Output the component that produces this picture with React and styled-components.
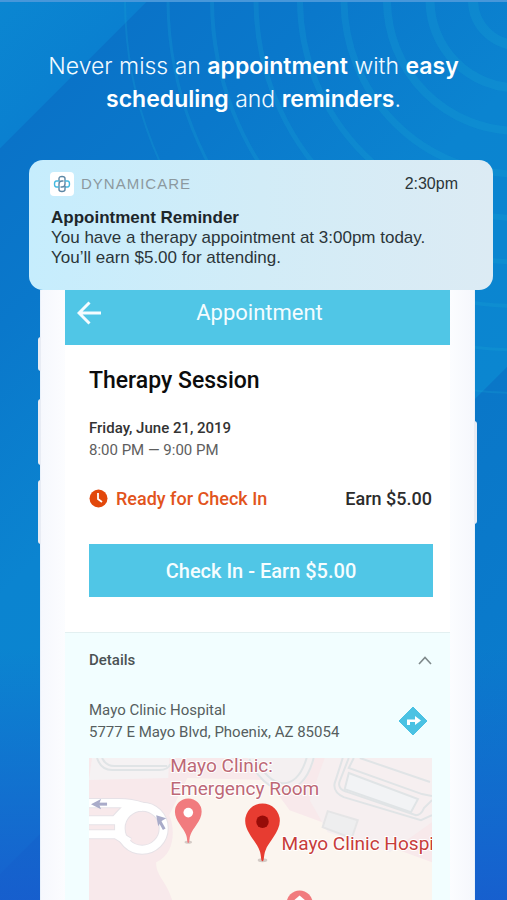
import React from "react";
import styled, { createGlobalStyle } from "styled-components";

const Global = createGlobalStyle`
  * { box-sizing: border-box; }
  body { margin: 0; font-family: Roboto, "Liberation Sans", sans-serif; color: #2c2c2c; }
  h1, h2, h3, p { margin: 0; font-weight: 400; }
  address { font-style: normal; }
  button { border: 0; padding: 0; background: none; font: inherit; color: inherit; cursor: pointer; }
  svg { display: block; }
`;

const Page = styled.div`
  position: relative;
  height: 100vh;
  overflow: hidden;
  display: flex;
  flex-direction: column;
  background: #0a7ccf;
`;

const Backdrop = styled.div`
  position: absolute;
  inset: 0;
  border-top: 2px solid #4797da;
  background:
    linear-gradient(180deg, rgba(24, 92, 206, 0) 72%, rgba(24, 92, 206, 0.9) 100%),
    linear-gradient(135deg, #0b86d1 0, #0a80d0 103px, transparent 104px),
    linear-gradient(135deg, #0a73c8 104px, #0a78cb 230px, #0b84d0 420px, #0b86d0 616px, #0a77c8 617px, #0a7ecf 100%);
  svg { position: absolute; top: 0; right: 0; }
`;

const Headline = styled.h1`
  position: relative;
  padding: 50px 36px 0;
  text-align: center;
  font-family: Inter, "Open Sans", sans-serif;
  font-size: 23px;
  line-height: 33px;
  font-weight: 300;
  color: #f2faff;
  strong { font-weight: 600; color: #fff; }
`;

const Notice = styled.section`
  position: relative;
  z-index: 1;
  margin: 44px 14px 0 29px;
  height: 130px;
  padding: 12px 35px 0 21px;
  border-radius: 14px;
  background: linear-gradient(90deg, #c6edfd, #d2ecf7 50%, #dcebf4);
  font-family: "Liberation Sans", sans-serif;
  font-size: 16px;
  line-height: 20px;
  color: #2b3539;
`;

const NoticeTop = styled.div`
  display: flex;
  align-items: center;
  height: 24px;
  gap: 7px;
`;

const AppBadge = styled.span`
  display: grid;
  place-items: center;
  width: 24px;
  height: 24px;
  border-radius: 4px;
  background: #fff;
`;

const AppName = styled.span`
  flex: 1;
  font-size: 15px;
  letter-spacing: 1px;
  color: #8c999f;
`;

const NoticeBody = styled.div`
  padding: 12px 0 0 1px;
  font-size: 17px;
  h2 { font-size: 17px; font-weight: 700; color: #1d262a; }
`;

const Phone = styled.main`
  position: relative;
  flex: 1;
  min-height: 0;
  margin: 0 32px 0 40px;
  padding: 0 25px;
  background: linear-gradient(90deg, #f6f8fd, #fcfdff 6%, #fcfdff 94%, #f5f7fc);
  border: solid #e9f1fa;
  border-width: 0 1px;
`;

const SideKey = styled.i`
  position: absolute;
  ${(p) => p.$side}: -3px;
  top: ${(p) => p.$top}px;
  width: 3px;
  height: ${(p) => p.$length}px;
  background: #e8ecf4;
  border-radius: ${(p) => (p.$side === "left" ? "3px 0 0 3px" : "0 3px 3px 0")};
`;

const Screen = styled.div`
  display: flex;
  flex-direction: column;
  height: 100%;
  margin: 0 -1px;
  background: #fff;
`;

const AppBar = styled.header`
  display: grid;
  grid-template-columns: 48px 1fr 44px;
  align-items: center;
  height: 55px;
  padding-bottom: 9px;
  background: #50c6e6;
  color: #f4fcff;
  text-align: center;
  h1 { font-size: 22px; line-height: 28px; }
  svg { margin: 0 auto; }
`;

const Session = styled.section`
  padding: 22px 17px 35px 24px;
`;

const Title = styled.h2`
  font-size: 23px;
  line-height: 28px;
  font-weight: 500;
  color: #0c0c0c;
`;

const When = styled.div`
  padding-top: 22px;
  font-size: 15px;
  line-height: 22px;
  color: #5e5e5e;
  strong { font-weight: 500; color: #333; }
`;

const StatusRow = styled.div`
  display: flex;
  align-items: center;
  justify-content: space-between;
  margin-top: 25px;
  padding-right: 1px;
  height: 24px;
  font-size: 18px;
  font-weight: 500;
`;

const Status = styled.span`
  display: flex;
  align-items: center;
  gap: 8px;
  color: #e2541c;
`;

const CheckIn = styled.button`
  && {
    width: 100%;
    height: 53px;
    margin-top: 34px;
    background: #50c6e6;
    color: #f6fdff;
    font-size: 20px;
    font-weight: 500;
  }
`;

const Details = styled.section`
  flex: 1;
  min-height: 0;
  display: flex;
  flex-direction: column;
  padding: 0 18px 0 24px;
  border-top: 1px solid #e3f0f1;
  background: #f2feff;
  color: #565e60;
  font-size: 15px;
  line-height: 22px;
`;

const DetailsToggle = styled.button`
  && {
    display: flex;
    align-items: center;
    justify-content: space-between;
    height: 54px;
    font-weight: 500;
    color: #4b5254;
  }
`;

const Place = styled.div`
  display: flex;
  align-items: center;
  justify-content: space-between;
  padding: 12px 4px 15px 0;
  height: 71px;
`;

const MapArea = styled.div`
  flex: 1;
  min-height: 0;
  overflow: hidden;
  background: #fbf5f0;
  svg { width: 100%; height: 142px; }
`;

function Logo() {
  return (
    <svg width="18" height="18" viewBox="0 0 18 18" fill="none" strokeWidth="1.4">
      <path d="M6 6V3.500Q6 1.500 9 1.500Q12 1.500 12 3.500V9Q12 12 9 12H7.500" stroke="#5c87a5" />
      <path d="M12 6H14.500Q16.500 6 16.500 9Q16.500 12 14.500 12H12" stroke="#45b9df" />
      <path d="M12 11V14.500Q12 16.500 9 16.500Q6 16.500 6 14.500V9Q6 6 9 6H10.500" stroke="#5c87a5" />
      <path d="M6 12H3.500Q1.500 12 1.500 9Q1.500 6 3.500 6H6" stroke="#45b9df" />
    </svg>
  );
}

function Rings() {
  const rings = [393, 350, 306, 262, 218, 174, 131, 88, 45];
  return (
    <svg width="507" height="400" viewBox="0 0 507 400" fill="none" stroke="#18a8d5" aria-hidden="true">
      {rings.map((r, i) => (
        <circle key={r} cx="518" cy="-2" r={r} strokeWidth={2 + i} opacity={0.24} />
      ))}
    </svg>
  );
}

function Pin({ x, y, scale, fill, dot }) {
  return (
    <g transform={`translate(${x} ${y}) scale(${scale})`}>
      <ellipse cx="0" cy="0" rx="5" ry="2" fill="#8b7f7a" opacity="0.35" />
      <path d="M0 1C-2 1 -1 -5 -3 -10C-6 -19 -18 -29 -18 -41A18 18 0 0 1 18 -41C18 -29 6 -19 3 -10C1 -5 2 1 0 1Z" fill={fill} />
      <circle cx="0" cy="-40" r="6.500" fill={dot} />
    </g>
  );
}

function RoundaboutRoads() {
  return (
    <>
      <path d="M0 45H30Q42 45 54 49" />
      <path d="M0 62H26L40 47" />
      <path d="M0 76H27L40 84" />
      <path d="M30 62V76" />
      <circle cx="53" cy="70" r="21.500" />
    </>
  );
}

function HospitalMap() {
  return (
    <svg viewBox="0 0 342 142" preserveAspectRatio="xMinYMin slice" role="img" aria-label="Map of Mayo Clinic Hospital">
      <path d="M0 0H342V142H0Z" fill="#f8e9eb" />
      <path d="M83 142C78 124 66 116 67 104C86 96 86 70 80 57L98 20L178 22L200 52L342 104V142Z" fill="#fbf5ef" />
      <path d="M158 0C176 42 214 45 225 0Z" fill="#f4f0f1" />
      <path d="M3 0L80 0L79 20L0 22Z" fill="#f5f2f3" />
      <path d="M235 0L342 0V64L300 94L238 74L220 42Z" fill="#f6eff0" />
      <g fill="none" stroke="#e0e4e6" strokeWidth="2">
        <path d="M8 0Q12 12 23 12H70Q79 12 81 6" />
        <path d="M13 0Q17 8 25 8H78" />
        <path d="M160 1C174 37 212 47 224 0M166 0C180 30 206 37 217 0" />
        <path d="M253 0L245 25Q243 34 254 39L331 62L342 57" />
        <path d="M259 0L250 23Q247 31 258 34L326 57Q331 57 334 50L342 42" />
        <path d="M264 0L259 10L332 36L342 38M270 0L340 24" />
      </g>
      <path d="M259 15L328 41L321 54L255 31Z" fill="#f2f3f5" stroke="#e0e4e6" strokeWidth="2" />
      <path d="M238 53L268 62L262 80L233 69Z" fill="#eeeeef" stroke="#e5e5e6" strokeWidth="2" />
      <g fill="none" stroke="#e6e2e7" strokeWidth="10"><RoundaboutRoads /></g>
      <g fill="none" stroke="#fff" strokeWidth="8"><RoundaboutRoads /></g>
      <g stroke="#a9abc9" strokeWidth="3" fill="#a9abc9">
        <path d="M6 46H18" />
        <path d="M2 46L12 41L10 46L12 51Z" stroke="none" />
        <path d="M75 71L70 62" />
        <path d="M67 57L77 60L72 63L69 68Z" stroke="none" />
      </g>
      <Pin x="99" y="84" scale="0.74" fill="#f17b7e" dot="#fff" />
      <Pin x="173" y="102" scale="0.96" fill="#e73c31" dot="#970c08" />
      <circle cx="210" cy="145" r="13" fill="#f17b7e" />
      <path d="M202 144L210 137L218 144Z" fill="#fff" />
      <g fontFamily="Roboto, sans-serif" fontSize="19" stroke="#fff" strokeWidth="2" paintOrder="stroke">
        <g fill="#bd6876">
          <text x="81" y="14">Mayo Clinic:</text>
          <text x="81" y="37">Emergency Room</text>
        </g>
        <text x="192" y="92" fill="#c73c3a">Mayo Clinic Hospi</text>
      </g>
    </svg>
  );
}

export default function App() {
  return (
    <Page>
      <Global />
      <Backdrop><Rings /></Backdrop>
      <Headline>
        Never miss an <strong>appointment</strong> with <strong>easy scheduling</strong> and <strong>reminders</strong>.
      </Headline>
      <Notice>
        <NoticeTop>
          <AppBadge><Logo /></AppBadge>
          <AppName>DYNAMICARE</AppName>
          <time>2:30pm</time>
        </NoticeTop>
        <NoticeBody>
          <h2>Appointment Reminder</h2>
          <p>You have a therapy appointment at 3:00pm today.</p>
          <p>You’ll earn $5.00 for attending.</p>
        </NoticeBody>
      </Notice>
      <Phone>
        <SideKey $side="left" $top={47} $length={34} />
        <SideKey $side="left" $top={109} $length={66} />
        <SideKey $side="left" $top={190} $length={64} />
        <SideKey $side="right" $top={131} $length={103} />
        <Screen>
          <AppBar>
            <button aria-label="Back">
              <svg width="24" height="24" viewBox="0 0 24 24" fill="none" stroke="currentColor" strokeWidth="3">
                <path d="M24 12H2M12.500 1.500L2 12L12.500 22.500" />
              </svg>
            </button>
            <h1>Appointment</h1>
          </AppBar>
          <Session>
            <Title>Therapy Session</Title>
            <When>
              <p><strong>Friday, June 21, 2019</strong></p>
              <p>8:00 PM — 9:00 PM</p>
            </When>
            <StatusRow>
              <Status>
                <svg width="19" height="19" viewBox="0 0 19 19" fill="none">
                  <circle cx="9.500" cy="9.500" r="9" fill="#e2480b" />
                  <path d="M9 4V10L13 13" stroke="#fff" strokeWidth="1.800" />
                </svg>
                Ready for Check In
              </Status>
              <span>Earn $5.00</span>
            </StatusRow>
            <CheckIn>Check In - Earn $5.00</CheckIn>
          </Session>
          <Details>
            <DetailsToggle aria-expanded="true">
              Details
              <svg width="14" height="9" viewBox="0 0 14 9" fill="none" stroke="#7f898b" strokeWidth="1.600">
                <path d="M1 8L7 1.500L13 8" />
              </svg>
            </DetailsToggle>
            <Place>
              <address>Mayo Clinic Hospital<br />5777 E Mayo Blvd, Phoenix, AZ 85054</address>
              <button aria-label="Directions">
                <svg width="30" height="30" viewBox="0 0 30 30">
                  <path d="M15 1L29 15L15 29L1 15Z" fill="#4bc2e3" stroke="#4bc2e3" strokeLinejoin="round" />
                  <path d="M9 19V13.500H17V10L23 14.500L17 19V16H12V19Z" fill="#fff" />
                </svg>
              </button>
            </Place>
            <MapArea><HospitalMap /></MapArea>
          </Details>
        </Screen>
      </Phone>
    </Page>
  );
}
